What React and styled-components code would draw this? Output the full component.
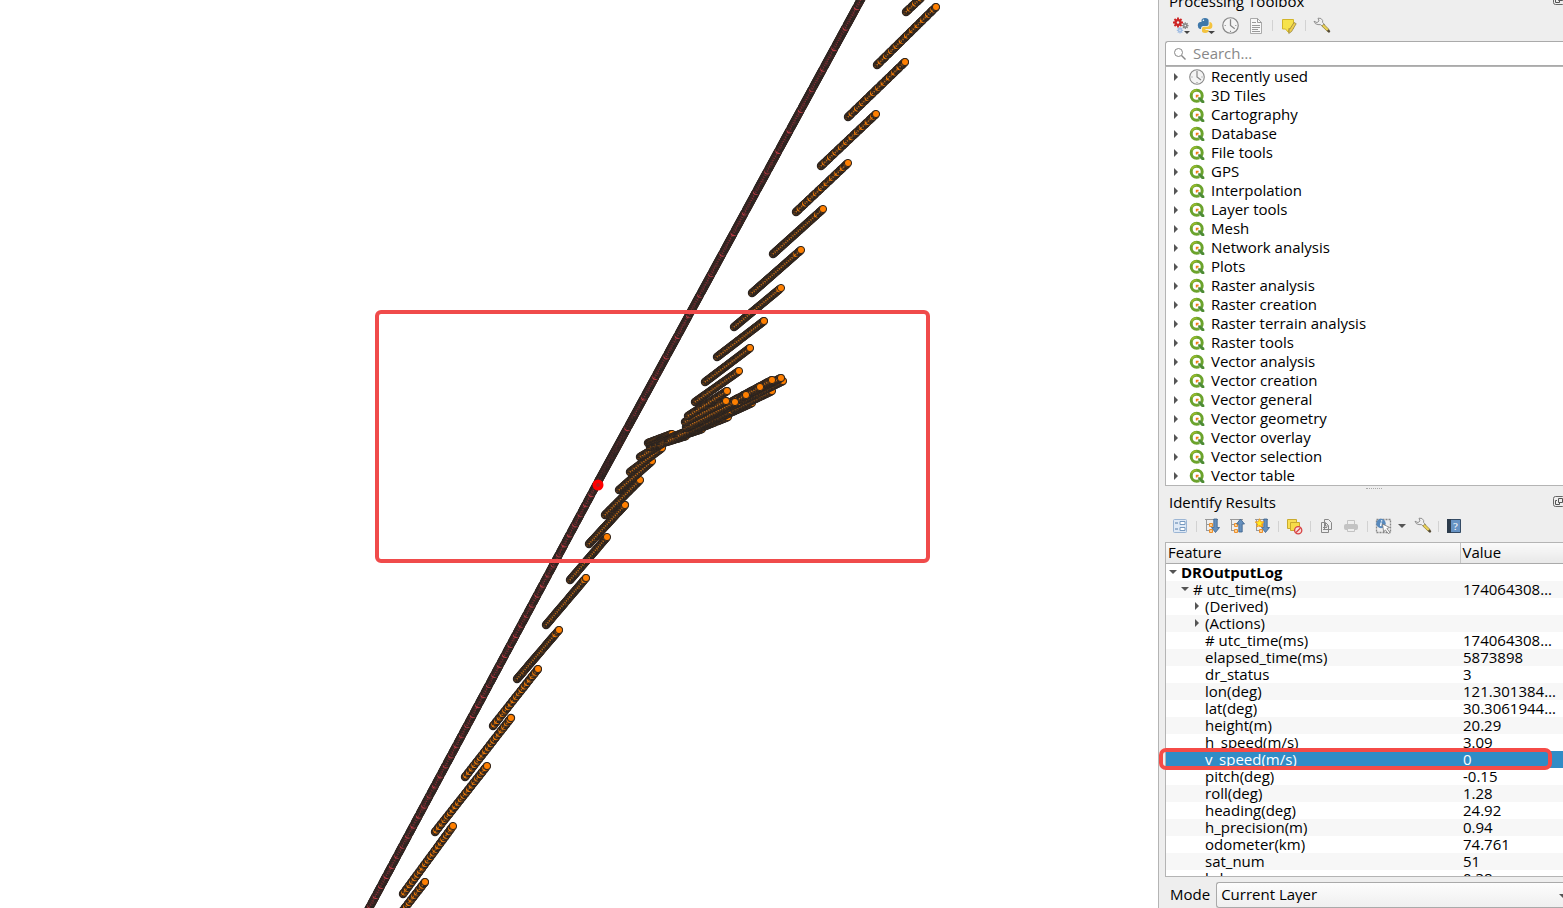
import React from "react";
import styled, { createGlobalStyle } from "styled-components";

const Global = createGlobalStyle`
  * { box-sizing: border-box; }
  html, body, #root { height: 100%; margin: 0; }
  body { overflow: hidden; background: #fff; color: #000; font: 15px/17px "Open Sans", "Noto Sans", sans-serif; }
`;

const Window = styled.main`
  display: grid;
  grid-template-columns: minmax(0, 1fr) 405px;
  height: 100vh;
  overflow: hidden;
`;
const Canvas = styled.section`
  position: relative;
  overflow: hidden;
  background: #fff;
  svg { display: block; }
`;
const MapFrame = styled.div`
  position: absolute;
  left: 375px;
  top: 310px;
  width: 555px;
  height: 253px;
  border: 4px solid #f04b4b;
  border-radius: 6px;
`;
const Dock = styled.aside`
  display: flex;
  flex-direction: column;
  min-width: 0;
  height: 100vh;
  padding-left: 6px;
  background: #eee;
  border-left: 1px solid #b4b4b4;
`;
const Title = styled.header`
  display: flex;
  justify-content: space-between;
  align-items: center;
  flex: none;
  height: ${(p) => (p.$clipped ? 10 : 24)}px;
  padding-left: 4px;
  h2 { margin: ${(p) => (p.$clipped ? "-8px" : "0")} 0 0; font-size: 15px; line-height: 20px; font-weight: 400; }
`;
const FloatButton = styled.button`
  width: 10px;
  height: 12px;
  margin-top: ${(p) => (p.$clipped ? "-10px" : "0")};
  padding: 0;
  border: 0;
  overflow: hidden;
  background: none;
  svg { display: block; }
`;
const Toolbar = styled.div`
  display: flex;
  flex: none;
  align-items: center;
  height: ${(p) => p.$height}px;
  padding-left: 7px;
  gap: ${(p) => p.$gap}px;
`;
const ToolPair = styled.div`
  display: flex;
  gap: 6px;
`;
const Tool = styled.button`
  display: flex;
  align-items: center;
  width: ${(p) => p.$width || 18}px;
  height: 20px;
  flex: none;
  padding: 0;
  border: 0;
  background: none;
  opacity: ${(p) => (p.disabled ? 0.5 : 1)};
  svg { flex: none; }
`;
const Divider = styled.span`
  width: 1px;
  height: 11px;
  flex: none;
  margin: 0 ${(p) => (p.$tight ? "-1px" : "0")};
  background: #d2d2d2;
`;
const Search = styled.label`
  display: flex;
  align-items: center;
  flex: none;
  gap: 6px;
  height: 25px;
  padding-left: 7px;
  background: #fff;
  border: 1px solid #aaa;
  border-right: 0;
  border-radius: 3px 0 0 0;
  input { flex: 1; min-width: 0; padding: 0; border: 0; outline: 0; background: none; font: inherit; }
  input::placeholder { color: #888; opacity: 1; }
`;
const Toolbox = styled.ul`
  flex: none;
  height: 420px;
  margin: 0;
  padding: 0;
  overflow: hidden;
  list-style: none;
  background: #fff;
  border: 1px solid #b4b4b4;
  border-right: 0;
`;
const ToolGroup = styled.li`
  display: flex;
  align-items: center;
  height: 19px;
  padding-left: 6px;
  white-space: nowrap;
  > svg { flex: none; }
  > svg + svg { margin: 0 6px 0 9px; }
`;
const Handle = styled.div`
  flex: none;
  width: 16px;
  height: 2px;
  margin: 2px 0 0 201px;
  border-top: 1px dotted #aaa;
`;
const Results = styled.div`
  flex: 1;
  min-height: 0;
  margin-top: 4px;
  overflow: hidden;
  background: #fff;
  border: 1px solid #b4b4b4;
  border-right: 0;
`;
const Table = styled.table`
  width: 100%;
  table-layout: fixed;
  border-collapse: collapse;
  th {
    height: 20px;
    padding: 0 2px;
    background: linear-gradient(#fafafa, #e8e8e8);
    border-bottom: 1px solid #aaa;
    font-weight: 400;
    text-align: left;
  }
  th:first-child { width: 294px; border-right: 1px solid #c4c4c4; }
`;
const ResultRow = styled.tr`
  height: 17px;
  background: ${(p) => (p.$selected ? "#308cc6" : p.$shade ? "#f7f7f7" : "#fff")};
  color: ${(p) => (p.$selected ? "#fff" : "#000")};
  font-weight: ${(p) => (p.$bold ? 700 : 400)};
  td { height: 17px; padding: 0 4px 0 3px; white-space: nowrap; }
`;
const Branch = styled.div`
  display: flex;
  align-items: center;
  height: 17px;
  padding-left: ${(p) => p.$depth * 12}px;
  gap: 4px;
  svg { flex: none; }
`;
const RowFrame = styled.div`
  position: absolute;
  right: 11px;
  top: 748px;
  width: 393px;
  height: 22px;
  border: 4px solid #f54b47;
  border-radius: 7px;
`;
const Mode = styled.label`
  display: flex;
  align-items: center;
  flex: none;
  gap: 6px;
  height: 31px;
  padding: 4px 0 0 5px;
  overflow: hidden;
`;
const ModeSelect = styled.div`
  position: relative;
  flex: 1;
  height: 26px;
  select {
    width: 100%; height: 26px; padding: 0 4px; appearance: none;
    border: 1px solid #aaa; border-right: 0; border-radius: 3px 0 0 3px;
    background: linear-gradient(#fdfdfd, #efefef); color: #000; font: inherit;
  }
  svg { position: absolute; right: -4px; top: 10px; }
`;

const Svg = ({ w = 18, h = 18, box, children }) => (
  <svg width={w} height={h} viewBox={box || `0 0 ${w} ${h}`} aria-hidden="true">{children}</svg>
);
const Arrow = ({ open }) => (
  <Svg w={8} h={8}>{open ? <path d="M0 2h8L4 6z" fill="#555" /> : <path d="M2 0v8l4-4z" fill="#555" />}</Svg>
);
const Clock = ({ size = 16 }) => (
  <Svg w={size} h={size} box="0 0 16 16">
    <circle cx="8" cy="8" r="7.3" fill="#f4f4f4" stroke="#888" strokeWidth="1.1" />
    <path d="M8 2v6l4 3" fill="none" stroke="#888" strokeWidth="1.2" />
    <path d="M2.5 8h1M12.5 8h1M8 13v1" stroke="#888" />
  </Svg>
);
const QMark = () => (
  <Svg w={16} h={16}>
    <circle cx="7.7" cy="7.7" r="5.5" fill="#fff" stroke="#6ba32c" strokeWidth="3" />
    <path d="M2.6 5.4a5.8 5.8 0 0 1 5-3.4" fill="none" stroke="#9abb2b" strokeWidth="1.6" />
    <path d="M9.5 8.2l6 5.3V15.6h-3.4L8.2 10z" fill="#fff" />
    <path d="M9.2 9.2h2.2l3.9 3.7v2h-2.4L9.2 11.5z" fill="#4d8c34" />
    <path d="M6.8 6.8h2.8v1.6H8.4v1.2H6.8z" fill="#ee7913" />
  </Svg>
);
const gear = (x, y, r, color) => {
  const spokes = [0, 45, 90, 135].map((a) => {
    const dx = Math.cos((a * Math.PI) / 180) * r;
    const dy = Math.sin((a * Math.PI) / 180) * r;
    return `M${x - dx} ${y - dy}L${x + dx} ${y + dy}`;
  }).join("");
  return (
    <g key={`${x}-${y}`}>
      <path d={spokes} stroke={color} strokeWidth={r * 0.38} />
      <circle cx={x} cy={y} r={r * 0.72} fill={color} />
      <circle cx={x} cy={y} r={r * 0.24} fill="#eee" />
    </g>
  );
};
const Gears = () => (
  <Svg w={18} h={18}>
    {gear(6, 5.5, 5, "#cd2626")}{gear(13.3, 8.6, 3.3, "#898989")}{gear(8, 13.3, 3.2, "#a3bfe4")}
    <path d="M12 14h6l-3 3z" fill="#444" />
  </Svg>
);
const Python = () => (
  <Svg w={18} h={18}>
    <path d="M4.5 5V3.6Q4.5 1 8 1t3.6 2.6V7q0 2-2 2H6.4Q4 9 4 12H3Q.8 11.4.8 8.4T3.6 5H8z" fill="#3f78aa" />
    <circle cx="6.4" cy="3.2" r=".8" fill="#fff" />
    <path d="M12.5 5H13q2.4.5 2.4 3.6T13 12H8.5v1h3.2q0 3-3.6 3T5 13.6v-2q0-1.8 2-1.8h3.2q2.3 0 2.3-2.8z" fill="#f4c33e" />
    <path d="M11 14h7l-3.5 3z" fill="#444" />
  </Svg>
);
const Page = () => (
  <Svg w={18} h={18}>
    <path d="M3.5 1.5h7l4 4v11h-11z" fill="#f8f8f8" stroke="#aaa" />
    <path d="M10.5 1.5v4h4M5 5.5h4M5 8.5h8M5 10.5h8M5 12.5h6M5 14.5h8" fill="none" stroke="#999" />
  </Svg>
);
const Note = () => (
  <Svg w={18} h={18}>
    <path d="M2.5 2.5h11v9h-5v4l-3-3.5h-3z" fill="#f7e34c" stroke="#d2b52a" />
    <path d="M14 5.5l2.2 1.2-4.6 7.8-2.8 2 .4-3.4z" fill="#efcf4d" stroke="#8a7a42" strokeWidth=".7" />
  </Svg>
);
const Wrench = () => (
  <Svg w={18} h={18}>
    <path d="M1 4.2l3 1.4 2-1.6L5 1.2q3.6-.6 4.6 2.2v2L12 8l-2 2-2.6-2.4H5Q2 7.6 1 4.2z" fill="#eee" stroke="#888" strokeWidth=".9" />
    <path d="M9.5 8.2l1.3-1L16 12.4l-1.8 1.8L8.8 9z" fill="#e7cf54" stroke="#88773a" strokeWidth=".7" />
    <path d="M13.8 14l2-1.8 1.6 2-1.4 1.8z" fill="#554b35" />
  </Svg>
);
const Form = () => (
  <Svg w={16} h={16}>
    <rect x="1.5" y="1.5" width="13" height="13" rx="1" fill="#dfe9f5" stroke="#9bb5d4" />
    <path d="M3 5h3M3 11h3" stroke="#557da9" />
    <path d="M8 3.5h5v3H8zM8 9.5h5v3H8z" fill="#fff" stroke="#779ac0" />
  </Svg>
);
const Tree = ({ up, star }) => (
  <Svg w={16} h={16}>
    <path d="M1 1.5h13M2.5 2v11M3 6.5h2M3 12.5h2" fill="none" stroke="#999" />
    <path d="M5.5 5.5h3v3h-3zM5.5 11.5h3v3h-3z" fill="#ffd192" stroke="#ed902b" />
    <path d={up ? "M11.5 1l4 5h-2.3v8H9.8V6H7.5z" : "M11.5 14.5l4-5h-2.3V1H9.8v8.5H7.5z"} fill="#6590bd" stroke="#385f8b" strokeWidth=".8" />
    {star && <path d="M5.5 .7l1.3 3 3.2.2-2.5 2 1 3.1-3-1.5L2.7 9l1-3-2.5-2 3.1-.3z" fill="#ffed21" stroke="#ef971b" strokeWidth=".9" />}
  </Svg>
);
const Deselect = () => (
  <Svg w={17} h={17}>
    <path d="M1.5 1.5h9v9h-9z" fill="#f9df54" stroke="#c9aa2e" />
    <path d="M4.5 4.5h9v8h-9z" fill="#f7dc48" stroke="#c9aa2e" />
    <circle cx="12.2" cy="12.2" r="3.6" fill="#f8dcdc" stroke="#d74242" strokeWidth="1.3" />
    <path d="M10 14.5l4.5-4.5" stroke="#d74242" strokeWidth="1.3" />
  </Svg>
);
const Copy = () => (
  <Svg w={16} h={16}>
    <path d="M6.5 1.5h4l3 3v7h-7zM3.5 4.5h4l3 3v7h-7z" fill="#eee" stroke="#888" />
    <path d="M7.5 5v3h3M5 9.5h4M5 11.5h4" fill="none" stroke="#888" />
  </Svg>
);
const Printer = () => (
  <Svg w={16} h={16}>
    <path d="M4.5 2.5h7v5h-7z" fill="#eee" stroke="#999" />
    <rect x="1" y="6" width="14" height="6" rx="2" fill="#999" />
    <path d="M4.5 10.5h7v3h-7z" fill="#eee" stroke="#999" />
  </Svg>
);
const Identify = () => (
  <Svg w={17} h={17}>
    <rect x="1.5" y="1.5" width="14" height="13" fill="none" stroke="#888" strokeWidth="1.3" strokeDasharray="2 1" />
    <circle cx="6" cy="5.5" r="4.7" fill="#588abd" />
    <path d="M6.6 2.2v1.2M6.2 4.5L5.6 8.2" stroke="#fff" strokeWidth="1.4" />
    <path d="M7.5 6l7 3.4-2.6 1.2 3 3.8-1.6 1.2-3-3.8-1.6 2.4z" fill="#fff" stroke="#777" strokeWidth=".8" />
  </Svg>
);
const Book = () => (
  <Svg w={16} h={16}>
    <path d="M1.5 1.5h13v13h-13z" fill="#6793c4" stroke="#344b65" /><path d="M1 1h4v14H1z" fill="#2d3c4c" />
    <text x="9.5" y="12" textAnchor="middle" fontFamily="Liberation Serif, serif" fontSize="11" fill="#fff">?</text>
  </Svg>
);
const FloatIcon = () => (
  <Svg w={12} h={12}>
    <rect x=".5" y=".5" width="11" height="10" rx="2" fill="none" stroke="#666" />
    <path d="M5.5 2.5h4v4h-4zM4 4.5H2.5v4h4V7" fill="none" stroke="#555" />
  </Svg>
);

const TRACKS = [
  [906, 12, 922, -3], [877, 65, 936, 7], [848, 117, 905, 62], [821, 166, 876, 114],
  [796, 212, 848, 163], [773, 254, 823, 209], [752, 293, 801, 250], [734, 327, 781, 288],
  [717, 357, 764, 321], [705, 382, 750, 348], [695, 402, 739, 371], [688, 416, 727, 391],
  [685, 422, 726, 401], [690, 425, 735, 402], [686, 427, 746, 395], [688, 426, 760, 387],
  [688, 425, 772, 380], [688, 425, 781, 378], [687, 428, 783, 381], [678, 436, 772, 391], [668, 441, 752, 403],
  [660, 444, 728, 417], [655, 445, 702, 429], [650, 447, 686, 436], [650, 446, 690, 430], [648, 443, 672, 434],
  [640, 457, 665, 442], [630, 472, 662, 448], [619, 490, 652, 461], [605, 515, 640, 480],
  [589, 544, 625, 505], [570, 580, 607, 537], [546, 625, 586, 578], [517, 679, 559, 630],
  [493, 726, 538, 669], [465, 777, 511, 718], [435, 832, 487, 766], [403, 894, 453, 826],
  [394, 922, 425, 882],
];
const HEADS = [[727, 391], [726, 401], [735, 402], [746, 395], [760, 387], [772, 380], [781, 378]];
const pointsOn = ([x1, y1, x2, y2], gap) => {
  const length = Math.hypot(x2 - x1, y2 - y1);
  const points = [];
  for (let d = 0, i = 0; d < length; i += 1) {
    points.push([x1 + ((x2 - x1) * d) / length, y1 + ((y2 - y1) * d) / length]);
    d += i % gap === gap - 1 ? 2.4 : 1;
  }
  points.push([x2, y2]);
  return points;
};
const Dots = ({ line, color, core, gap }) => {
  const points = pointsOn(line, gap);
  const [x2, y2] = points[points.length - 1];
  return (
    <g fill={color} stroke="#2b2420" strokeWidth="1.2">
      {points.slice(0, -1).map(([x, y], i) => <circle key={i} cx={x} cy={y} r="3.6" />)}
      <path d={`M${line[0]} ${line[1]}L${x2} ${y2}`} stroke={core} strokeWidth="1.4" strokeDasharray="1 1.4" />
      <circle cx={x2} cy={y2} r="3.6" strokeWidth="1" />
    </g>
  );
};
const FIRST_WIDE = 33;
const trackGap = (i) => (i > FIRST_WIDE ? 3 : i < 5 ? 6 : 60);
const TrackMap = () => (
  <svg width="1158" height="908" role="img" aria-label="Logged positions">
    {[[366, 914, 599, 480], [599, 480, 634, 416], [634, 416, 865, -8]].map((line, i) => (
      <Dots key={i} line={line} color="#c43c45" core={i === 1 ? "#3a2228" : "#8a2f38"} gap={[10, 60, 22][i]} />
    ))}
    {TRACKS.map((line, i) => (
      <Dots key={i} line={line} color="#ff7f00" core={i > 20 && i < 26 ? "#6b451c" : "#c8701a"} gap={trackGap(i)} />
    )).reverse()}
    {HEADS.map(([x, y]) => <circle key={x} cx={x} cy={y} r="3.6" fill="#ff7f00" stroke="#2b2420" />)}
    <circle cx="598" cy="485" r="3.7" fill="#b41e1e" stroke="#f00" strokeWidth="3.6" />
  </svg>
);

const GROUPS = ["Recently used", "3D Tiles", "Cartography", "Database", "File tools", "GPS", "Interpolation", "Layer tools", "Mesh", "Network analysis", "Plots", "Raster analysis", "Raster creation", "Raster terrain analysis", "Raster tools", "Vector analysis", "Vector creation", "Vector general", "Vector geometry", "Vector overlay", "Vector selection", "Vector table"];
const ROWS = [
  ["DROutputLog", "", 0, "open"], ["# utc_time(ms)", "174064308…", 1, "open"],
  ["(Derived)", "", 2, "closed"], ["(Actions)", "", 2, "closed"],
  ["# utc_time(ms)", "174064308…", 3], ["elapsed_time(ms)", "5873898", 3],
  ["dr_status", "3", 3], ["lon(deg)", "121.301384…", 3], ["lat(deg)", "30.3061944…", 3],
  ["height(m)", "20.29", 3], ["h_speed(m/s)", "3.09", 3], ["v_speed(m/s)", "0", 3],
  ["pitch(deg)", "-0.15", 3], ["roll(deg)", "1.28", 3], ["heading(deg)", "24.92", 3],
  ["h_precision(m)", "0.94", 3], ["odometer(km)", "74.761", 3], ["sat_num", "51", 3], ["hdop", "0.38", 3],
];

export default function App() {
  return (
    <Window>
      <Global />
      <Canvas><TrackMap /><MapFrame /></Canvas>
      <Dock>
        <Title $clipped><h2>Processing Toolbox</h2><FloatButton $clipped aria-label="Float toolbox"><FloatIcon /></FloatButton></Title>
        <Toolbar $height={31} $gap={7}>
          <Tool aria-label="Models"><Gears /></Tool>
          <Tool aria-label="Scripts"><Python /></Tool>
          <Tool aria-label="History"><Clock size={17} /></Tool>
          <Tool aria-label="Results viewer"><Page /></Tool>
          <Divider />
          <Tool aria-label="Edit in place"><Note /></Tool>
          <Divider />
          <Tool aria-label="Options"><Wrench /></Tool>
        </Toolbar>
        <Search>
          <Svg w={14} h={14}><circle cx="5.5" cy="5.5" r="4" fill="none" stroke="#888" /><path d="M8.5 8.5l4 4" stroke="#888" strokeWidth="1.4" /></Svg>
          <input placeholder="Search…" aria-label="Search" />
        </Search>
        <Toolbox>
          {GROUPS.map((name, i) => <ToolGroup key={name}><Arrow />{i === 0 ? <Clock /> : <QMark />}{name}</ToolGroup>)}
        </Toolbox>
        <Handle />
        <Title><h2>Identify Results</h2><FloatButton aria-label="Float results"><FloatIcon /></FloatButton></Title>
        <Toolbar $height={24} $gap={8}>
          <Tool $width={17} aria-label="View feature form"><Form /></Tool>
          <Divider $tight />
          <Tool $width={17} aria-label="Expand tree"><Tree /></Tool>
          <Tool $width={17} aria-label="Collapse tree"><Tree up /></Tool>
          <Tool $width={17} aria-label="Expand new results"><Tree star /></Tool>
          <Divider $tight />
          <Tool $width={17} aria-label="Clear results"><Deselect /></Tool>
          <Divider $tight />
          <Tool $width={17} aria-label="Copy feature"><Copy /></Tool>
          <Tool $width={17} disabled aria-label="Print"><Printer /></Tool>
          <Divider $tight />
          <ToolPair>
            <Tool $width={17} aria-label="Identify features"><Identify /></Tool>
            <Tool $width={8} aria-label="Identify menu"><Arrow open /></Tool>
          </ToolPair>
          <Tool $width={17} aria-label="Identify settings"><Wrench /></Tool>
          <Divider $tight />
          <Tool $width={17} aria-label="Help"><Book /></Tool>
        </Toolbar>
        <Results>
          <Table>
            <thead><tr><th>Feature</th><th>Value</th></tr></thead>
            <tbody>
              {ROWS.map(([name, value, depth, state], i) => (
                <ResultRow key={i} $bold={i === 0} $shade={i % 2 === 1} $selected={i === 11}>
                  <td><Branch $depth={depth}>{state && <Arrow open={state === "open"} />}{name}</Branch></td>
                  <td>{value}</td>
                </ResultRow>
              ))}
            </tbody>
          </Table>
        </Results>
        <Mode>Mode
          <ModeSelect>
            <select aria-label="Mode" defaultValue="Current Layer"><option>Current Layer</option></select>
            <Arrow open />
          </ModeSelect>
        </Mode>
      </Dock>
      <RowFrame />
    </Window>
  );
}
